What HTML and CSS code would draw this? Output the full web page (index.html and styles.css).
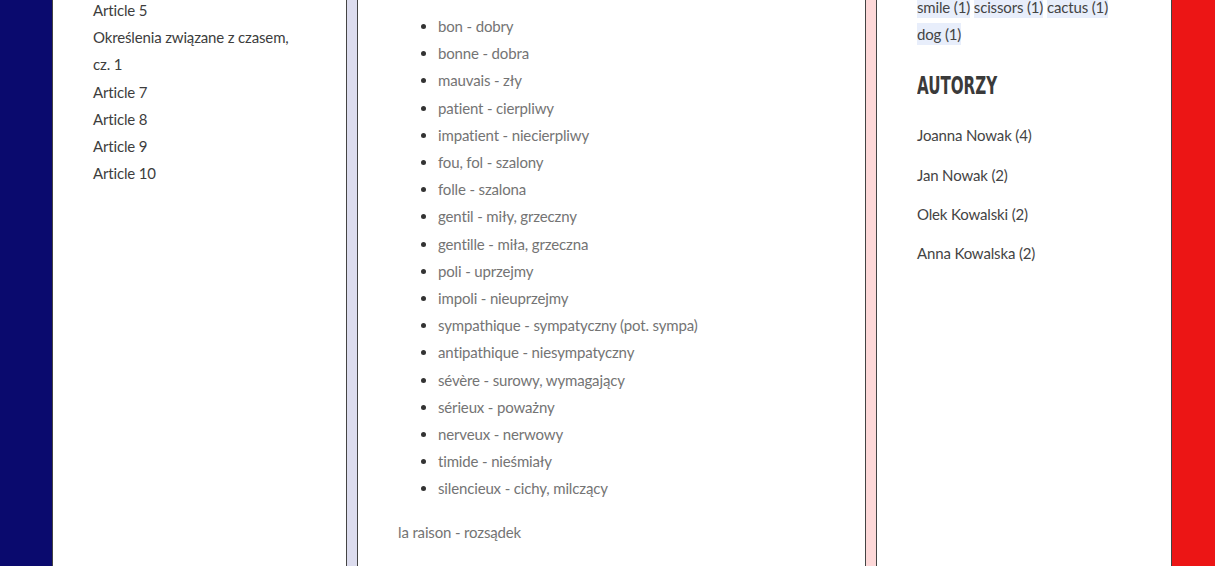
FILE: index.html
```html
<!DOCTYPE html>
<html lang="pl">
<head>
<meta charset="utf-8">
<title>Przymiotniki</title>
<link rel="stylesheet" href="styles.css">
</head>
<body>
<div class="page">
  <div class="stripe stripe-blue"></div>
  <aside class="col col-left">
    <ul class="article-list">
      <li>Article 5</li>
      <li>Określenia związane z czasem, cz.&nbsp;1</li>
      <li>Article 7</li>
      <li>Article 8</li>
      <li>Article 9</li>
      <li>Article 10</li>
    </ul>
  </aside>
  <div class="gap gap-blue"></div>
  <main class="col col-main">
    <ul class="vocab">
      <li>bon - dobry</li>
      <li>bonne - dobra</li>
      <li>mauvais - zły</li>
      <li>patient - cierpliwy</li>
      <li>impatient - niecierpliwy</li>
      <li>fou, fol - szalony</li>
      <li>folle - szalona</li>
      <li>gentil - miły, grzeczny</li>
      <li>gentille - miła, grzeczna</li>
      <li>poli - uprzejmy</li>
      <li>impoli - nieuprzejmy</li>
      <li>sympathique - sympatyczny (pot. sympa)</li>
      <li>antipathique - niesympatyczny</li>
      <li>sévère - surowy, wymagający</li>
      <li>sérieux - poważny</li>
      <li>nerveux - nerwowy</li>
      <li>timide - nieśmiały</li>
      <li>silencieux - cichy, milczący</li>
    </ul>
    <p class="para">la raison - rozsądek</p>
  </main>
  <div class="gap gap-red"></div>
  <aside class="col col-right">
    <div class="tags">
      <span class="tag">smile&nbsp;(1)</span>
      <span class="tag">scissors&nbsp;(1)</span>
      <span class="tag">cactus&nbsp;(1)</span>
      <span class="tag">dog&nbsp;(1)</span>
    </div>
    <h3 class="widget-title"><span>AUTORZY</span></h3>
    <ul class="authors">
      <li>Joanna Nowak (4)</li>
      <li>Jan Nowak (2)</li>
      <li>Olek Kowalski (2)</li>
      <li>Anna Kowalska (2)</li>
    </ul>
  </aside>
  <div class="stripe stripe-red"></div>
</div>
</body>
</html>
```
FILE: styles.css
```css
html, body {
  margin: 0;
  padding: 0;
  height: 100%;
  overflow: hidden;
}
body {
  font-family: "Lato", "Open Sans", sans-serif;
  font-size: 15px;
  letter-spacing: -0.15px;
  background: #fff;
}
.page {
  display: flex;
  height: 566px;
}
.stripe-blue {
  width: 52px;
  flex: none;
  background: #0a0a6e;
}
.stripe-red {
  flex: 1;
  background: #ec1515;
}
.gap {
  width: 10px;
  flex: none;
}
.gap-blue { background: #dcdcee; }
.gap-red { background: #fdd8d8; }
.col {
  flex: none;
  background: #fff;
  border-left: 1px solid #444;
  border-right: 1px solid #444;
  box-sizing: border-box;
  overflow: hidden;
}
.col-left {
  width: 295px;
  padding: 0 40px;
}
.col-main {
  width: 509px;
  padding: 0 40px;
}
.col-right {
  width: 296px;
  padding: 0 40px;
}
.article-list {
  list-style: none;
  margin: -3px 0 0;
  padding: 0;
  line-height: 27.2px;
  color: #3d3d3d;
}
.vocab {
  margin: 13px 0 16px;
  padding-left: 40px;
  line-height: 27.2px;
  color: #747474;
}
.vocab li::marker {
  color: #333;
}
.para {
  margin: 0;
  line-height: 27.2px;
  color: #747474;
}
.tags {
  margin-top: -6px;
  line-height: 27.2px;
  color: #444;
}
.tag {
  background: #e8eefb;
  padding: 2px 0;
}
.widget-title {
  margin: 23px 0 21px;
  font-family: "Liberation Sans Narrow", "DejaVu Sans Condensed", sans-serif;
  font-weight: bold;
  font-size: 24px;
  line-height: 30px;
  letter-spacing: 0;
  color: #3a3a3a;
}
.widget-title span {
  display: inline-block;
  transform: scaleX(0.7);
  transform-origin: left center;
}
.authors {
  list-style: none;
  margin: 0;
  padding: 0;
  line-height: 27.2px;
  color: #444;
}
.authors li {
  margin-bottom: 12px;
}
```
